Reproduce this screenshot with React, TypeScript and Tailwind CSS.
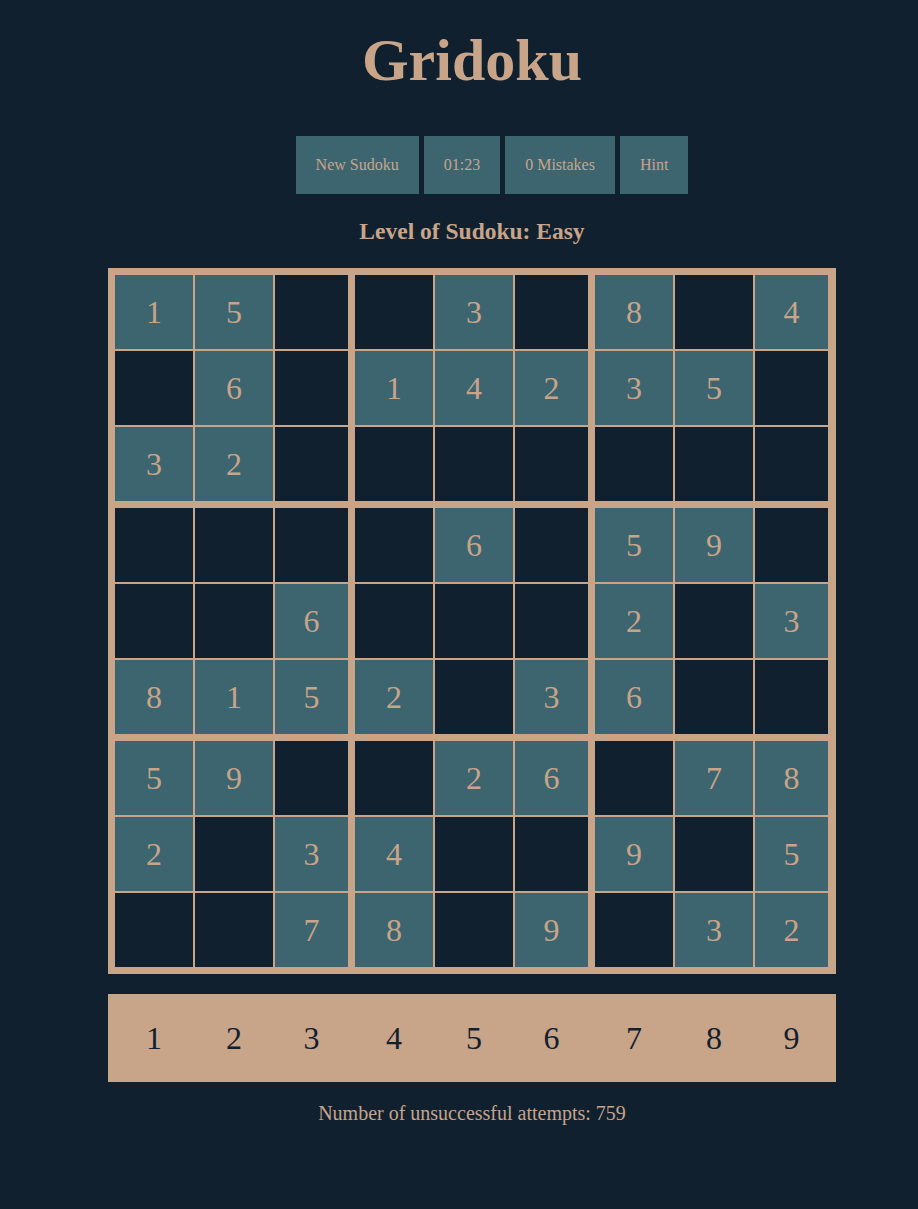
import React from 'react';

const board: number[][] = [
  [1, 5, 0, 0, 3, 0, 8, 0, 4],
  [0, 6, 0, 1, 4, 2, 3, 5, 0],
  [3, 2, 0, 0, 0, 0, 0, 0, 0],
  [0, 0, 0, 0, 6, 0, 5, 9, 0],
  [0, 0, 6, 0, 0, 0, 2, 0, 3],
  [8, 1, 5, 2, 0, 3, 6, 0, 0],
  [5, 9, 0, 0, 2, 6, 0, 7, 8],
  [2, 0, 3, 4, 0, 0, 9, 0, 5],
  [0, 0, 7, 8, 0, 9, 0, 3, 2],
];

const buttons = ['New Sudoku', '01:23', '0 Mistakes', 'Hint'];

const Box: React.FC<{ br: number; bc: number }> = ({ br, bc }) => {
  const cells: number[] = [];
  for (let r = 0; r < 3; r++) {
    for (let c = 0; c < 3; c++) {
      cells.push(board[br * 3 + r][bc * 3 + c]);
    }
  }
  return (
    <div className="grid grid-cols-[78px_78px_73px] grid-rows-[74px_74px_74px] gap-[2px]">
      {cells.map((v, i) => (
        <div
          key={i}
          className={`flex items-center justify-center text-[32px] leading-none ${
            v ? 'bg-[#3d6570]' : 'bg-[#11202f]'
          }`}
        >
          {v ? v : ''}
        </div>
      ))}
    </div>
  );
};

export default function App() {
  return (
    <div className="min-h-screen bg-[#11202f] font-['Liberation_Serif',serif] text-[#c8a489]">
      <div className="ml-[108px] w-[728px] flex flex-col items-stretch pt-[30px] pb-[60px]">
        <h1 className="text-center text-[60px] font-bold leading-[60px]">Gridoku</h1>

        {/* controls */}
        <div className="mt-[46px] flex justify-center gap-[5px] pl-[40px]">
          {buttons.map((b) => (
            <button
              key={b}
              className="h-[58px] px-5 bg-[#3d6570] text-[16px] leading-[18px] text-[#c8a489]"
            >
              {b}
            </button>
          ))}
        </div>

        <h2 className="mt-[23px] text-center text-[23.5px] font-bold leading-[28px]">
          Level of Sudoku: Easy
        </h2>

        {/* board */}
        <div className="mt-[23px] bg-[#c8a489] p-[7px] pr-[8px] flex flex-col gap-[7px]">
          {[0, 1, 2].map((br) => (
            <div key={br} className="flex gap-[7px]">
              {[0, 1, 2].map((bc) => (
                <Box key={bc} br={br} bc={bc} />
              ))}
            </div>
          ))}
        </div>

        {/* number picker */}
        <div className="mt-[20px] h-[88px] bg-[#c8a489] px-[7px] flex gap-[7px] text-[#11202f]">
          {[0, 1, 2].map((g) => (
            <div key={g} className="grid grid-cols-[78px_78px_73px] gap-[2px]">
              {[1, 2, 3].map((n) => (
                <div key={n} className="flex items-center justify-center text-[32px] leading-none">
                  {g * 3 + n}
                </div>
              ))}
            </div>
          ))}
        </div>

        <p className="mt-[19px] text-center text-[20px] leading-[24px]">
          Number of unsuccessful attempts: 759
        </p>
      </div>
    </div>
  );
}
